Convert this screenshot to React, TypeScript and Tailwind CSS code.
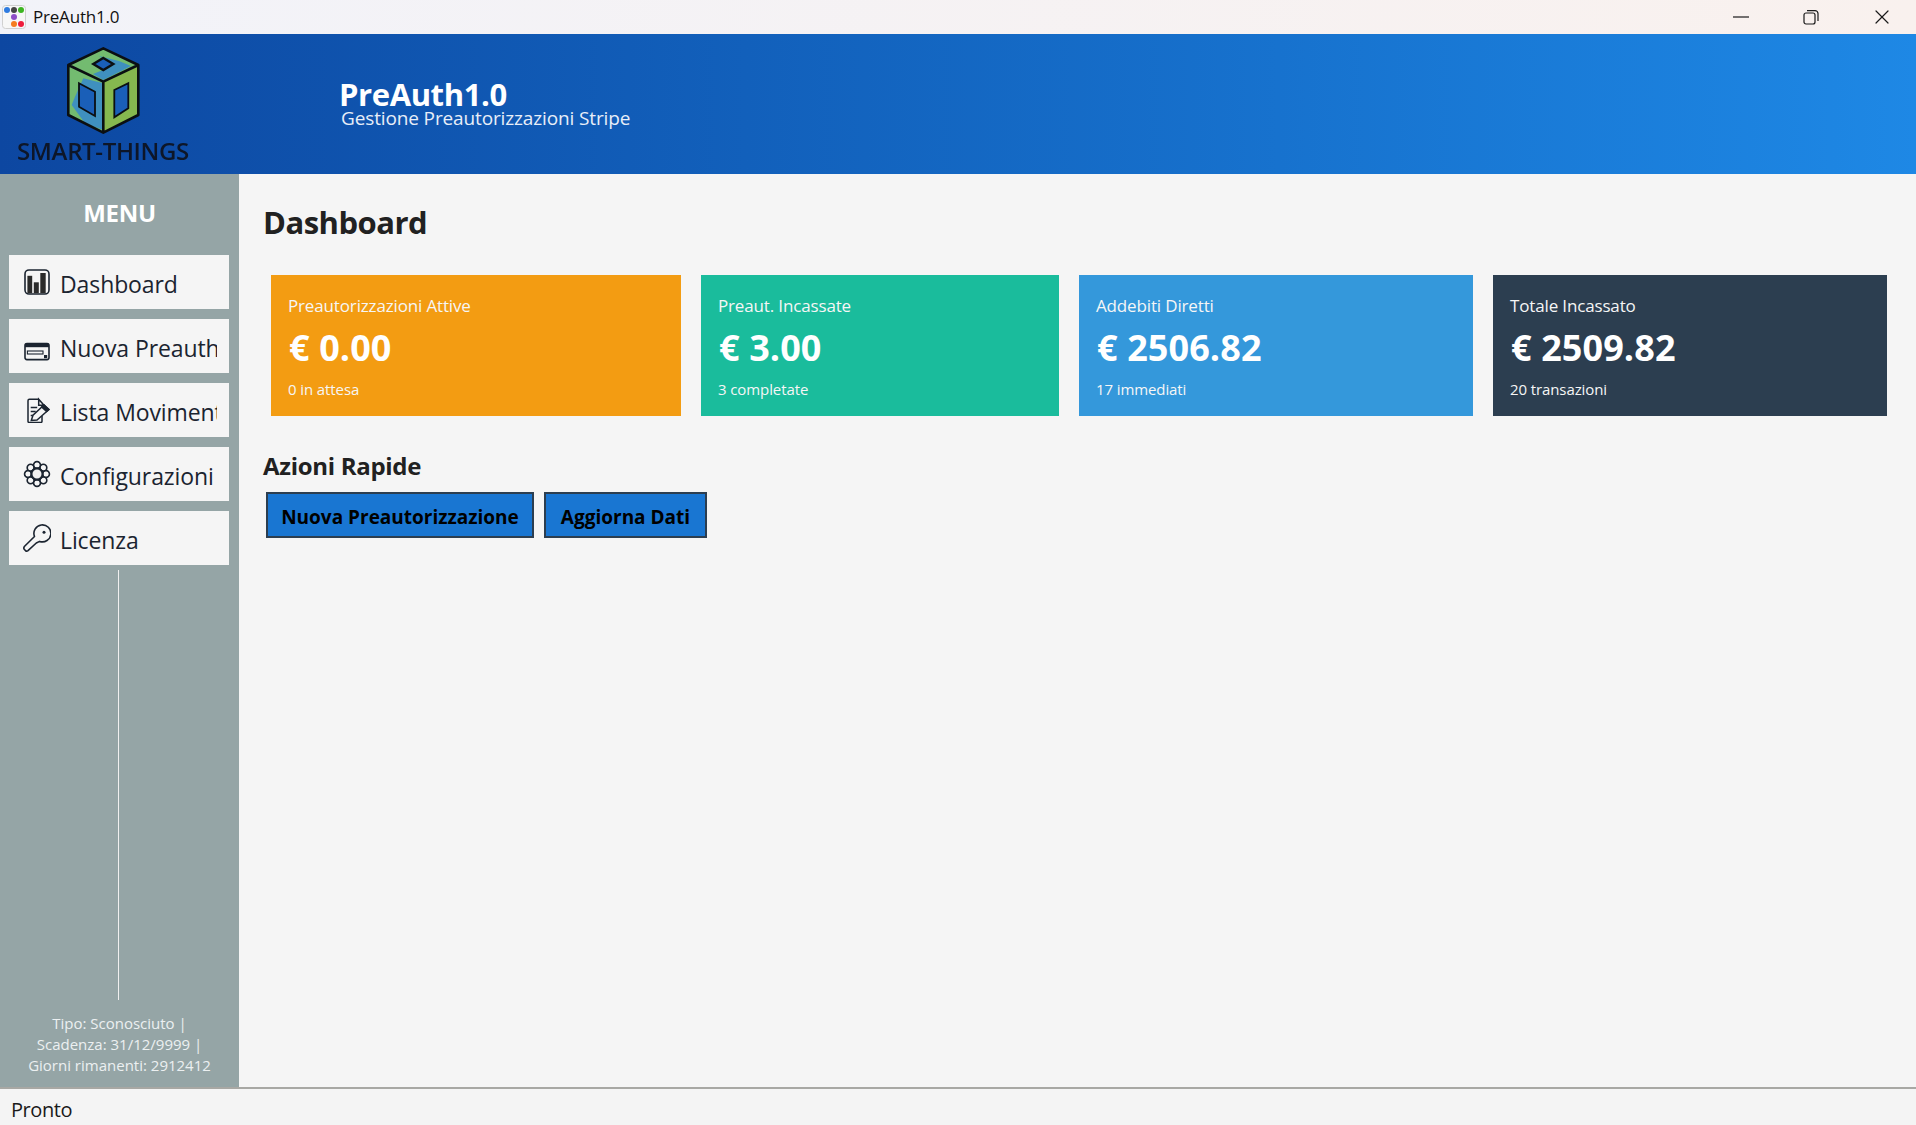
import { X } from "lucide-react";

const font = "font-['Open_Sans','Noto_Sans',sans-serif]";

const cards = [
  { title: "Preautorizzazioni Attive", value: "€ 0.00", note: "0 in attesa", bg: "bg-[#f39c12]", width: "w-[410px]" },
  { title: "Preaut. Incassate", value: "€ 3.00", note: "3 completate", bg: "bg-[#1abc9c]", width: "w-[358px]" },
  { title: "Addebiti Diretti", value: "€ 2506.82", note: "17 immediati", bg: "bg-[#3498db]", width: "w-[394px]" },
  { title: "Totale Incassato", value: "€ 2509.82", note: "20 transazioni", bg: "bg-[#2c3e50]", width: "w-[394px]" },
];

function AppIcon() {
  return (
    <svg width="24" height="24" viewBox="0 0 24 24" className="shrink-0">
      <rect x="0.5" y="0.5" width="23" height="23" rx="3" fill="#f7f7f7" stroke="#d0d0d0" />
      <circle cx="5" cy="5" r="3" fill="#2f7be0" />
      <circle cx="12" cy="5" r="3" fill="#444444" />
      <circle cx="19" cy="5" r="3" fill="#3cb521" />
      <circle cx="12" cy="12" r="3" fill="#8e4ec6" />
      <circle cx="12" cy="19" r="3" fill="#f57c1f" />
      <circle cx="19" cy="19" r="3" fill="#ee1c3c" />
    </svg>
  );
}

function MinimizeIcon() {
  return (
    <svg width="16" height="16" viewBox="0 0 16 16" fill="none" stroke="#1a1a1a" strokeWidth="1.2">
      <path d="M0 8h16" />
    </svg>
  );
}

function RestoreIcon() {
  return (
    <svg width="16" height="16" viewBox="0 0 16 16" fill="none" stroke="#1a1a1a" strokeWidth="1.2">
      <rect x="1" y="4" width="11" height="11" rx="2" />
      <path d="M4 1.6h8a3 3 0 0 1 3 3V12" />
    </svg>
  );
}

function Logo() {
  return (
    <svg width="74" height="88" viewBox="0 0 74 88" className="block blur-[0.5px]">
      <path d="M36.3 1.3 71.3 18 36.3 34.7 1.3 18Z" fill="#73bb70" />
      <path d="M32 9 52 14 64 19 36.3 33 26 27 41 21 38 13Z" fill="#3f90bf" />
      <path d="M1.3 18 36.3 34.7V85.7L1.3 68Z" fill="#73bb70" />
      <path d="M16.3 31.3 36.3 36.3V83L18 76.3 4.7 58 8 49.7Z" fill="#3f90bf" />
      <path d="M71.3 18 36.3 34.7V85.7L71.3 68Z" fill="#86b84f" />
      <path d="M12 36.3 28 44.7V69L12 59.7Z" fill="#1a5fb8" stroke="#0b0f12" strokeWidth="1.8" />
      <path d="M47.3 43 61.3 36.3V61.3L47.3 70.3Z" fill="#1a5fb8" stroke="#0b0f12" strokeWidth="1.8" />
      <path d="M36.3 11 46.3 17 36.3 23 26.3 17Z" fill="#1a5fb8" stroke="#0b0f12" strokeWidth="2.4" />
      <path
        d="M36.3 1.3 71.3 18V68L36.3 85.7 1.3 68V18ZM1.3 18 36.3 34.7 71.3 18M36.3 34.7V85.7"
        fill="none"
        stroke="#0b0f12"
        strokeWidth="2.6"
        strokeLinejoin="round"
      />
    </svg>
  );
}

function ChartIcon() {
  return (
    <svg width="26" height="26" viewBox="0 0 26 26" fill="none">
      <rect x="1" y="1" width="24" height="24" rx="4" fill="#f5f5f5" stroke="#1b2430" strokeWidth="1.6" />
      <rect x="3.4" y="6.8" width="4.8" height="17.4" fill="#2a2a2a" />
      <rect x="9.8" y="13.3" width="5" height="10.9" fill="#2a2a2a" />
      <rect x="16.3" y="4" width="5.4" height="20.2" fill="#2a2a2a" />
    </svg>
  );
}

function CardIcon() {
  return (
    <svg width="26" height="26" viewBox="0 0 26 26" fill="none" className="translate-y-[7px]">
      <rect x="1" y="3.6" width="24" height="16" rx="2" fill="#f5f5f5" stroke="#1b2430" strokeWidth="1.6" />
      <rect x="1" y="3.6" width="24" height="3.6" fill="#1b2430" />
      <rect x="3.4" y="11" width="15.6" height="3" stroke="#1b2430" strokeWidth="1.1" />
      <rect x="20" y="15" width="3.2" height="3.2" fill="#1b2430" />
    </svg>
  );
}

function NoteIcon() {
  return (
    <svg width="26" height="26" viewBox="0 0 26 26" fill="none" stroke="#1b2430" strokeWidth="1.5">
      <path d="M14.7 2.3H5.4A1.4 1.4 0 0 0 4 3.7v20.5a1.4 1.4 0 0 0 1.4 1.4H16.6a1.4 1.4 0 0 0 1.4-1.4V19" />
      <path d="M14.7 2.3V8.3H20L14.7 2.3Z" />
      <path d="M6.7 10.5h6.5M6.7 14.5h5M6.7 18.5h2.8" strokeWidth="1.3" />
      <path d="M7.3 23.4 9 18.2 20 8 25 12.5 13 23Z" fill="#f5f5f5" />
      <path d="M20 8 25 12.5 22.6 14.6 17.7 10.1Z" fill="#1b2430" />
    </svg>
  );
}

function GearIcon() {
  const angles = [0, 45, 90, 135, 180, 225, 270, 315];
  const petals = angles.map((angle) => ({
    angle,
    cx: 13 + 9 * Math.cos((angle * Math.PI) / 180),
    cy: 13 + 9 * Math.sin((angle * Math.PI) / 180),
  }));
  return (
    <svg width="26" height="26" viewBox="0 0 26 26" fill="none" className="overflow-visible">
      {petals.map((p) => (
        <circle key={p.angle} cx={p.cx} cy={p.cy} r="3.3" stroke="#1b2430" strokeWidth="1.9" />
      ))}
      {petals.map((p) => (
        <circle key={p.angle} cx={p.cx} cy={p.cy} r="2.5" fill="#f5f5f5" />
      ))}
      <circle cx="13" cy="13" r="5.6" fill="#f0f0f0" stroke="#1b2430" strokeWidth="2.2" />
    </svg>
  );
}

function KeyIcon() {
  return (
    <svg width="28" height="28" viewBox="0 0 28 28" fill="none" stroke="#1b2430" strokeWidth="1.6" strokeLinejoin="round">
      <path d="M11.5 12.5 1.6 22.2Q0.4 23.6 1 25L2.6 26.8Q3.8 27.6 5 26.6L13.3 19 16.6 17.4A8.5 8.5 0 1 0 11.5 12.5Z" />
      <circle cx="21" cy="8.3" r="1.5" fill="#1b2430" stroke="none" />
    </svg>
  );
}

const navItems = [
  { label: "Dashboard", icon: <ChartIcon /> },
  { label: "Nuova Preauth", icon: <CardIcon /> },
  { label: "Lista Movimenti", icon: <NoteIcon /> },
  { label: "Configurazioni", icon: <GearIcon /> },
  { label: "Licenza", icon: <KeyIcon /> },
];

export default function App() {
  return (
    <div className={`flex h-[1125px] w-[1916px] flex-col overflow-hidden bg-[#f5f5f5] ${font}`}>
      <div className="flex h-[34px] shrink-0 items-center bg-gradient-to-r from-[#f2f3f9] to-[#f9f1ee] pl-[2px]">
        <AppIcon />
        <span className="ml-[7px] text-[17px] tracking-[-0.2px] text-[#111111]">PreAuth1.0</span>
        <div className="ml-auto flex items-center">
          <button type="button" className="flex w-[70px] justify-center">
            <MinimizeIcon />
          </button>
          <button type="button" className="flex w-[70px] justify-center">
            <RestoreIcon />
          </button>
          <button type="button" className="flex w-[70px] justify-center pl-[2px]">
            <X size={24} strokeWidth={1.2} color="#1a1a1a" />
          </button>
        </div>
      </div>

      <header className="flex h-[140px] shrink-0 bg-gradient-to-r from-[#0d47a1] to-[#1e88e5]">
        <div className="flex w-[339px] shrink-0 flex-col pl-[17px] pt-[13px]">
          <div className="ml-[50px]">
            <Logo />
          </div>
          <span className="mt-[4px] w-[172px] text-[24px] leading-[24px] font-semibold tracking-[-0.35px] whitespace-nowrap text-[#0d1628] blur-[0.4px]">
            SMART-THINGS
          </span>
        </div>
        <div className="flex flex-col pt-[42px]">
          <span className="text-[31px] leading-[36px] font-bold tracking-[-0.4px] text-white">PreAuth1.0</span>
          <span className="-mt-[6px] ml-[2px] text-[19px] leading-[24px] tracking-[-0.13px] text-[#e8eef8]">
            Gestione Preautorizzazioni Stripe
          </span>
        </div>
      </header>

      <div className="flex min-h-0 flex-1">
        <aside className="flex w-[239px] shrink-0 flex-col bg-[#95a5a6]">
          <h2 className="mt-[24px] text-center text-[24px] leading-[30px] font-bold tracking-[-0.3px] text-white">MENU</h2>
          <nav className="mt-[27px] ml-[9px] flex w-[220px] flex-col gap-[10px]">
            {navItems.map((item) => (
              <button
                key={item.label}
                type="button"
                className="flex h-[54px] items-center overflow-hidden bg-[#f5f5f5] pl-[14px] text-left"
              >
                <span className="flex w-[28px] shrink-0 justify-center">{item.icon}</span>
                <span className="mt-[3px] ml-[9px] w-[157px] overflow-hidden text-[23px] leading-[32px] tracking-[-0.1px] whitespace-nowrap text-[#1b2430]">
                  {item.label}
                </span>
              </button>
            ))}
          </nav>
          <div className="mt-[5px] ml-[118px] w-px flex-1 bg-[#f0f0f0]" />
          <div className="mt-[13px] mb-[11px] text-center text-[15px] leading-[21px] text-[#ecf0f1]">
            <p>Tipo: Sconosciuto |</p>
            <p>Scadenza: 31/12/9999 |</p>
            <p>Giorni rimanenti: 2912412</p>
          </div>
        </aside>

        <main className="flex-1 pl-[24px]">
          <h1 className="mt-[28px] text-[31px] leading-[40px] font-bold tracking-[-0.5px] text-[#212121]">Dashboard</h1>
          <div className="mt-[33px] ml-[8px] flex gap-5">
            {cards.map((card) => (
              <div key={card.title} className={`flex h-[141px] flex-col px-[17px] pt-[17px] text-white ${card.bg} ${card.width}`}>
                <span className="text-[17px] leading-[28px] tracking-[-0.15px] text-[#f6f6f6]">{card.title}</span>
                <span className="mt-[4px] ml-[1px] text-[36px] leading-[48px] font-bold tracking-[0.1px]">{card.value}</span>
                <span className="mt-[7px] text-[15px] leading-[20px] tracking-[-0.1px] text-[#f6f6f6]">{card.note}</span>
              </div>
            ))}
          </div>
          <h3 className="mt-[35px] text-[24px] leading-[30px] font-bold tracking-[-0.3px] text-[#212121]">Azioni Rapide</h3>
          <div className="mt-[11px] ml-[3px] flex gap-[10px]">
            <button type="button" className="h-[46px] w-[268px] border-2 border-[#2c3e50] bg-[#1976d2] pt-[4px] text-[19px] font-bold tracking-[0px] text-black">
              Nuova Preautorizzazione
            </button>
            <button type="button" className="h-[46px] w-[163px] border-2 border-[#2c3e50] bg-[#1976d2] pt-[4px] text-[19px] font-bold tracking-[0px] text-black">
              Aggiorna Dati
            </button>
          </div>
        </main>
      </div>

      <footer className="flex h-[38px] shrink-0 items-center border-t-2 border-[#a8a8a4] bg-[#f4f4f4] pl-[11px] pt-[5px] text-[20px] tracking-[-0.45px] text-[#1a1a1a]">
        Pronto
      </footer>
    </div>
  );
}
